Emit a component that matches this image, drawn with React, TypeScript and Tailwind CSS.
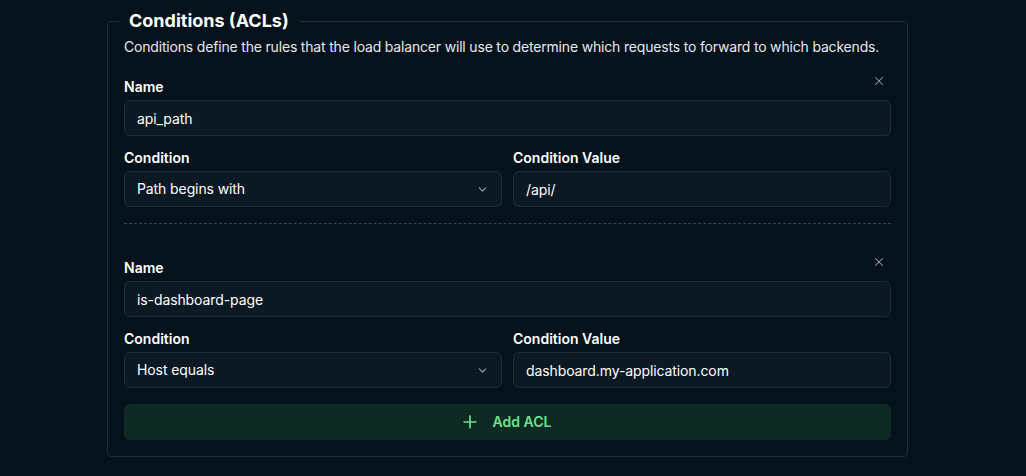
import { ChevronDown, Plus, X } from 'lucide-react'

type Acl = { name: string; condition: string; value: string }

const ACLS: Acl[] = [
  { name: 'api_path', condition: 'Path begins with', value: '/api/' },
  { name: 'is-dashboard-page', condition: 'Host equals', value: 'dashboard.my-application.com' },
]

const inputCls =
  'block w-full h-9 rounded-md border border-[#1e2d3a] bg-[#0a1924] px-3 text-sm text-white outline-none tracking-[-0.1px]'

function AclBlock({ acl }: { acl: Acl }) {
  return (
    <div className="relative">
      <button
        type="button"
        aria-label="Remove ACL"
        className="absolute right-[5px] top-[-3px] text-gray-400 hover:text-white"
      >
        <X size={14} strokeWidth={1.75} />
      </button>
      <label className="block">
        <span className="block text-sm font-semibold text-white mb-[3px] leading-5">Name</span>
        <input className={inputCls} defaultValue={acl.name} />
      </label>
      <div className="grid grid-cols-2 gap-[11px] mt-3">
        <label className="block">
          <span className="block text-sm font-semibold text-white mb-[3px] leading-5">Condition</span>
          <div className={`${inputCls} flex items-center justify-between`}>
            <span>{acl.condition}</span>
            <ChevronDown size={13} className="text-gray-400" />
          </div>
        </label>
        <label className="block">
          <span className="block text-sm font-semibold text-white mb-[3px] leading-5">Condition Value</span>
          <input className={inputCls} defaultValue={acl.value} />
        </label>
      </div>
    </div>
  )
}

export default function App() {
  return (
    <div className="min-h-[476px] bg-[#04121c] pt-[7px] font-['Inter',sans-serif]">
      <fieldset className="ml-[107px] w-[801px] min-w-0 rounded-[4px] border border-[#1e2d3a] px-4 pb-4">
        <legend className="ml-[-5px] px-2.5 text-lg font-bold text-white leading-7">Conditions (ACLs)</legend>
        <p className="mt-[2px] text-sm text-[#e5e9ee] leading-5 whitespace-nowrap tracking-[-0.18px]">
          Conditions define the rules that the load balancer will use to determine which requests to forward to which backends.
        </p>
        <div className="mt-5">
          {ACLS.map((acl, i) => (
            <div key={acl.name}>
              {i > 0 && <div className="border-t border-dashed border-[#364551] mt-4 mb-[34px]" />}
              <AclBlock acl={acl} />
            </div>
          ))}
        </div>
        <button
          type="button"
          className="mt-4 flex h-9 w-full items-center justify-center gap-[13px] rounded-md bg-[#0e2b23] pr-[4px] text-sm font-semibold text-[#6ee08a]"
        >
          <Plus size={20} strokeWidth={2} />
          Add ACL
        </button>
      </fieldset>
    </div>
  )
}
